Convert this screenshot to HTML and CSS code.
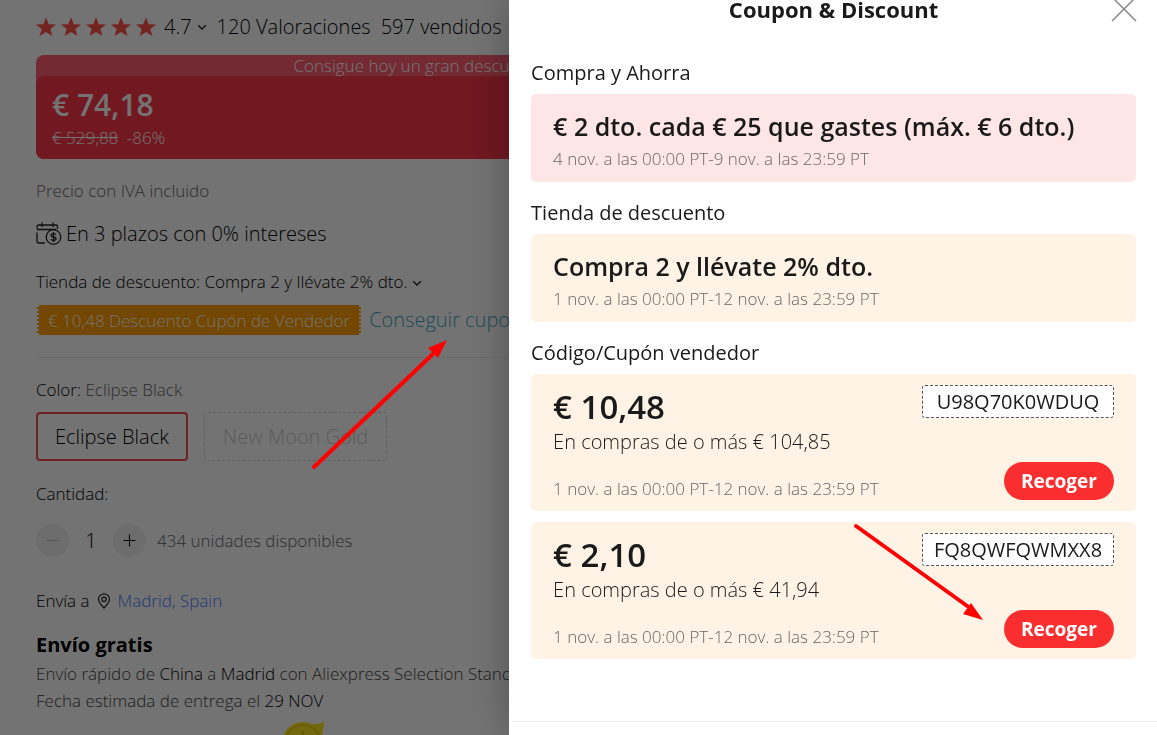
FILE: index.html
```html
<!DOCTYPE html>
<html lang="es">
<head>
  <meta charset="UTF-8">
  <meta name="viewport" content="width=device-width, initial-scale=1.0">
  <title>Coupon &amp; Discount</title>
  <link rel="stylesheet" href="styles.css">
</head>
<body>
  <svg class="sprite" width="0" height="0" aria-hidden="true">
    <symbol id="star" viewBox="0 0 20 20"><path d="M10 0.300l2.700 6.900 7.300 0.200-5.700 4.500 2.100 7.200L10 15l-6.400 4.100 2.100-7.200L0 7.400l7.300-0.200z"/></symbol>
    <symbol id="chevron" viewBox="0 0 10 10"><path d="M1.2 3.2L5 7l3.8-3.800" fill="none" stroke="#222" stroke-width="1.300"/></symbol>
  </svg>

  <main class="product">
    <div class="rating">
      <span class="stars">
        <svg><use href="#star"/></svg>
        <svg><use href="#star"/></svg>
        <svg><use href="#star"/></svg>
        <svg><use href="#star"/></svg>
        <svg><use href="#star"/></svg>
      </span>
      <span class="score">4.7</span>
      <svg class="chevron"><use href="#chevron"/></svg>
      <span class="reviews">120 Valoraciones</span>
      <span>597 vendidos</span>
    </div>

    <div class="banner">
      <div class="banner-top">Consigue hoy un gran descuento</div>
      <div class="banner-main">
        <div class="price">€ 74,18</div>
        <div class="old-price"><del>€ 529,88</del> <span>-86%</span></div>
      </div>
    </div>

    <p class="tax">Precio con IVA incluido</p>

    <p class="plazos">
      <svg width="26" height="24" viewBox="0 0 26 24" fill="none" stroke="#222" stroke-width="1.300">
        <path d="M1 6.500V4.500Q1 3 2.500 3H20Q21.500 3 21.500 4.500V7M1 7.500H20M6 0.500V5M17 0.500V5M1 10.500V19Q1 21 3 21H9"/>
        <circle cx="17.500" cy="15" r="7.300"/>
        <path d="M20 12.800Q19.500 11.600 17.500 11.600Q15.200 11.600 15.200 13.300Q15.200 14.800 17.500 15Q20 15.300 20 16.800Q20 18.400 17.500 18.400Q15.300 18.400 15 17.200M17.500 10V20"/>
      </svg>
      En 3 plazos con 0% intereses
    </p>

    <p class="store">Tienda de descuento: Compra 2 y llévate 2% dto. <svg class="chevron"><use href="#chevron"/></svg></p>

    <div class="coupon-row">
      <span class="coupon-tag">€ 10,48 Descuento Cupón de Vendedor</span>
      <a href="#cupones">Conseguir cupones</a>
    </div>

    <p class="color">Color: <span>Eclipse Black</span></p>
    <div class="options">
      <button type="button" class="option selected">Eclipse Black</button>
      <button type="button" class="option" disabled>New Moon Gold</button>
    </div>

    <label class="qty-label" for="qty">Cantidad:</label>
    <div class="quantity">
      <button type="button" class="round" aria-label="Menos" disabled><svg viewBox="0 0 14 14"><path d="M0.500 7h13"/></svg></button>
      <input id="qty" type="text" value="1">
      <button type="button" class="round" aria-label="Más"><svg viewBox="0 0 14 14"><path d="M0.500 7h13M7 0.500v13"/></svg></button>
      <span>434 unidades disponibles</span>
    </div>

    <p class="ship-to">
      Envía a
      <svg width="14" height="16" viewBox="0 0 14 16" fill="none" stroke="#222" stroke-width="1.200"><path d="M7 15C3.500 11.500 1.500 9 1.500 6.300a5.500 5.500 0 0 1 11 0C12.500 9 10.500 11.500 7 15z"/><circle cx="7" cy="6.300" r="2.200"/></svg>
      <a href="#envio">Madrid, Spain</a>
    </p>
    <h2>Envío gratis</h2>
    <p class="delivery">Envío rápido de <b>China</b> a <b>Madrid</b> con Aliexpress Selection Standard</p>
    <p class="delivery">Fecha estimada de entrega el <b>29 NOV</b></p>
    <svg class="coin" width="44" height="44" viewBox="0 0 44 44">
      <path d="M30 3q8 1 12-3 0 8-3 16z" fill="#ffe81c"/>
      <circle cx="21" cy="22" r="21" fill="#ffe81c"/>
      <circle cx="21" cy="22" r="18" fill="none" stroke="#e8cf10" stroke-width="2"/>
      <path d="M21 10v12" stroke="#e0c400" stroke-width="2"/>
    </svg>
  </main>

  <div class="mask"></div>

  <aside class="drawer" id="cupones">
    <header>
      <h1>Coupon &amp; Discount</h1>
      <button type="button" class="close" aria-label="Cerrar"><svg viewBox="0 0 26 26"><path d="M1 1l24 24M25 1L1 25"/></svg></button>
    </header>

    <section>
      <h3>Compra y Ahorra</h3>
      <div class="card pink">
        <div class="deal">€ 2 dto. cada € 25 que gastes (máx. € 6 dto.)</div>
        <div class="dates">4 nov. a las 00:00 PT-9 nov. a las 23:59 PT</div>
      </div>
    </section>

    <section>
      <h3>Tienda de descuento</h3>
      <div class="card">
        <div class="deal">Compra 2 y llévate 2% dto.</div>
        <div class="dates">1 nov. a las 00:00 PT-12 nov. a las 23:59 PT</div>
      </div>
    </section>

    <section>
      <h3>Código/Cupón vendedor</h3>
      <div class="card coupon">
        <div>
          <div class="amount">€ 10,48</div>
          <div class="minimum">En compras de o más € 104,85</div>
          <div class="dates">1 nov. a las 00:00 PT-12 nov. a las 23:59 PT</div>
        </div>
        <div class="side">
          <span class="code">U98Q70K0WDUQ</span>
          <button type="button" class="get">Recoger</button>
        </div>
      </div>
      <div class="card coupon">
        <div>
          <div class="amount">€ 2,10</div>
          <div class="minimum">En compras de o más € 41,94</div>
          <div class="dates">1 nov. a las 00:00 PT-12 nov. a las 23:59 PT</div>
        </div>
        <div class="side">
          <span class="code">FQ8QWFQWMXX8</span>
          <button type="button" class="get">Recoger</button>
        </div>
      </div>
    </section>

    <footer></footer>
  </aside>

  <!-- red arrows drawn over the page -->
  <svg class="arrow arrow-link" width="140" height="132" viewBox="0 0 140 132"><path d="M4 129L124 15"/><polygon points="137,2 118,10 128,20"/></svg>
  <svg class="arrow arrow-button" width="134" height="100" viewBox="0 0 134 100"><path d="M4 4L118 86"/><polygon points="131,98 119,81 111,92"/></svg>
</body>
</html>
```
FILE: styles.css
```css
* {
  box-sizing: border-box;
}
body {
  margin: 0;
  height: 100vh;
  overflow: hidden;
  font-family: "Open Sans", "Noto Sans", sans-serif;
  font-size: 17px;
  font-weight: 300;
  line-height: 24px;
  color: #000;
  background-color: #fff;
}
h1, h2, h3, p {
  margin: 0;
}
a {
  text-decoration: none;
}
button, input {
  font: inherit;
  color: inherit;
  border: none;
  padding: 0;
}
.sprite {
  display: block;
}

/* product page */
.product {
  max-width: 838px;
  padding: 14px 36px 0;
  white-space: nowrap;
}
.rating {
  display: flex;
  align-items: center;
  gap: 10px;
  height: 26px;
  font-size: 20px;
}
.stars {
  display: flex;
  gap: 5px;
}
.stars svg {
  width: 20px;
  height: 20px;
  fill: #ff4f47;
}
.score {
  margin-right: -5px;
  margin-left: -2px;
}
.chevron {
  width: 10px;
  height: 10px;
}
.banner {
  margin-top: 15px;
  border-radius: 8px;
  background-color: #ff5d71;
  color: #fff;
}
.banner-top {
  line-height: 21px;
  text-align: center;
}
.banner-main {
  height: 83px;
  padding: 10px 16px;
  border-radius: 8px;
  background-color: #fa354a;
}
.price {
  font-size: 30px;
  font-weight: 600;
  line-height: 38px;
}
.old-price {
  line-height: 28px;
}
.old-price span {
  margin-left: 4px;
}
.tax {
  margin-top: 20px;
  color: #666;
}
.plazos {
  display: flex;
  align-items: center;
  gap: 4px;
  margin-top: 18px;
  font-size: 20px;
  line-height: 26px;
}
.store {
  margin-top: 23px;
}
.coupon-row {
  display: flex;
  align-items: center;
  gap: 8px;
  margin-top: 11px;
  padding-bottom: 22px;
  border-bottom: 1px solid #eee;
}
.coupon-tag {
  margin-left: 1px;
  padding: 2px 9px 0;
  line-height: 28px;
  color: #fff;
  background-color: #ff9e00;
  border-left: 2px dotted #fff;
  border-right: 2px dotted #fff;
}
.coupon-row a {
  font-size: 20px;
  line-height: 30px;
  color: #3fa5c8;
}
.color {
  margin-top: 20px;
}
.color span {
  color: #666;
}
.options {
  display: flex;
  gap: 16px;
  margin-top: 10px;
}
.option {
  height: 49px;
  padding: 0 17px;
  font-size: 20px;
  line-height: 24px;
  background: none;
  border: 2px solid #f5484f;
  border-radius: 4px;
}
.option:disabled {
  color: #ccc;
  border: 1px dashed #d4d4d4;
  padding: 0 18px;
}
.qty-label {
  display: block;
  margin-top: 21px;
}
.quantity {
  display: flex;
  align-items: center;
  margin-top: 18px;
  color: #666;
}
.round {
  width: 33px;
  height: 33px;
  border-radius: 50%;
  background-color: #f2f2f2;
}
.round svg {
  display: block;
  width: 13px;
  height: 13px;
  margin: 0 auto;
  stroke: #000;
  stroke-width: 1.2;
}
.round:disabled svg {
  stroke: #bbb;
}
.quantity input {
  width: 44px;
  text-align: center;
  font-size: 20px;
  color: #000;
  background: none;
}
.quantity span {
  margin-left: 11px;
}
.ship-to {
  display: flex;
  align-items: center;
  gap: 7px;
  margin-top: 32px;
}
.ship-to a {
  color: #4a7dff;
}
.product h2 {
  margin-top: 17px;
  font-size: 20px;
  font-weight: 700;
  line-height: 30px;
}
.delivery {
  line-height: 27px;
  color: #444;
}
.delivery b {
  font-weight: 300;
  color: #000;
}
.coin {
  display: block;
  margin: 7px 0 0 246px;
}
.mask {
  position: fixed;
  inset: 0;
  background-color: rgba(0, 0, 0, 0.55);
}

/* coupon drawer */
.drawer {
  position: fixed;
  top: 0;
  right: 0;
  bottom: 0;
  width: 56%;
  padding: 0 21px 0 22px;
  background-color: #fff;
  color: #1a1a1a;
  box-shadow: 0 0 40px rgba(0, 0, 0, 0.3);
}
.drawer header {
  display: flex;
  justify-content: center;
  height: 52px;
}
.drawer h1 {
  font-size: 22px;
  font-weight: 700;
  line-height: 18px;
}
.close {
  position: absolute;
  top: -4px;
  right: 20px;
  width: 26px;
  height: 26px;
  background: none;
}
.close svg {
  display: block;
  stroke: #888;
  stroke-width: 1.5;
}
.drawer section {
  margin-bottom: 10px;
}
.drawer h3 {
  padding: 8px 0;
  font-size: 20px;
  font-weight: 400;
  line-height: 26px;
}
.card {
  height: 88px;
  padding: 14px 22px 0;
  border-radius: 5px;
  background-color: #fff3e5;
}
.pink {
  background-color: #ffe6e6;
}
.deal {
  font-size: 25px;
  font-weight: 600;
  line-height: 36px;
}
.dates {
  line-height: 30px;
  color: #666;
}
.coupon {
  display: flex;
  justify-content: space-between;
  height: 137px;
  padding: 11px 22px;
  margin-bottom: 11px;
}
.amount {
  font-size: 33px;
  font-weight: 600;
  line-height: 44px;
}
.minimum {
  margin-bottom: 19px;
  font-size: 20px;
  line-height: 26px;
}
.side {
  display: flex;
  flex-direction: column;
  align-items: flex-end;
  justify-content: space-between;
}
.code {
  width: 192px;
  border: 1px dashed #555;
  border-radius: 3px;
  background-color: #fff;
  font-size: 20px;
  font-weight: 400;
  line-height: 31px;
  text-align: center;
}
.get {
  width: 110px;
  height: 38px;
  border-radius: 19px;
  background-color: #fb2e2f;
  color: #fff;
  font-size: 19px;
  font-weight: 700;
}
.drawer footer {
  margin: 62px -21px 0 -19px;
  border-top: 1px solid #eee;
}

/* arrows */
.arrow {
  position: absolute;
  fill: #f00;
  pointer-events: none;
}
.arrow path {
  stroke: #f00;
  stroke-width: 4;
  stroke-linecap: round;
}
.arrow-link {
  left: 310px;
  top: 338px;
}
.arrow-button {
  left: 852px;
  top: 522px;
}
```
